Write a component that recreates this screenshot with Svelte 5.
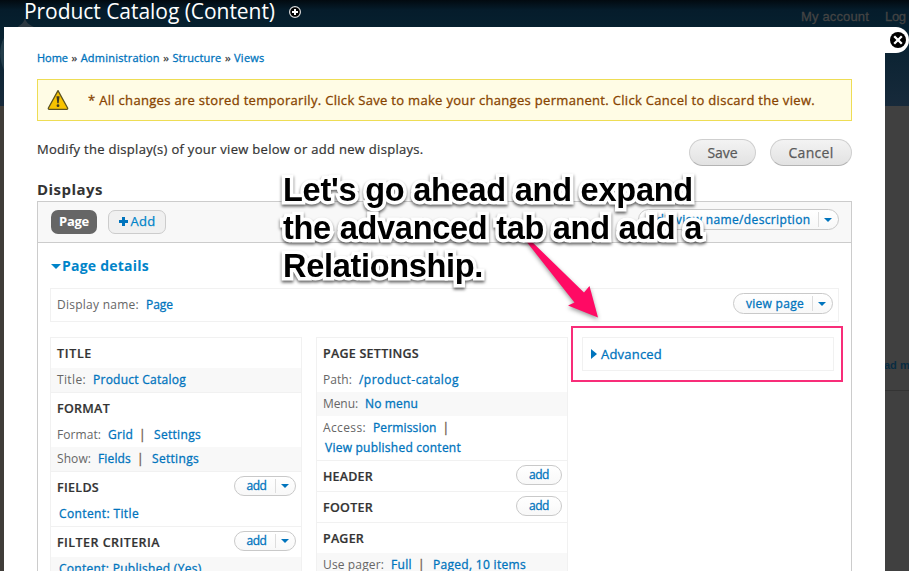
<script>
  // Spreads the letters of a label so that it fills the given measure.
  function fit(node, width) {
    const natural = node.getBoundingClientRect().width;
    const count = node.textContent.length;
    node.style.letterSpacing = `${(width - natural) / count}px`;
  }

  const crumbs = [['Home', 31], ['Administration', 79], ['Structure', 49], ['Views', 30.5]];

  const left = [
    { title: 'TITLE', w: 35, rows: [{ odd: true, items: [['Title:', 29], ['Product Catalog', 93, 'a']] }] },
    {
      title: 'FORMAT', w: 53,
      rows: [
        { items: [['Format:', 44], ['Grid', 25, 'a'], ['|', 3, 'bar'], ['Settings', 47, 'a']] },
        { odd: true, items: [['Show:', 34], ['Fields', 33, 'a'], ['|', 3, 'bar'], ['Settings', 47, 'a']] }
      ]
    },
    { title: 'FIELDS', w: 42, add: 'split', rows: [{ items: [['Content: Title', 80, 'a lone']] }] },
    { title: 'FILTER CRITERIA', w: 103, add: 'split', rows: [{ odd: true, items: [['Content: Published (Yes)', 142.5, 'a lone']] }] }
  ];

  const middle = [
    {
      title: 'PAGE SETTINGS', w: 96,
      rows: [
        { items: [['Path:', 29], ['/product-catalog', 100, 'a']] },
        { odd: true, items: [['Menu:', 35], ['No menu', 53, 'a']] },
        { items: [['Access:', 43], ['Permission', 63.5, 'a'], ['|', 3, 'bar']], second: ['View published content', 136] }
      ]
    },
    { title: 'HEADER', w: 50, add: 'single', rows: [] },
    { title: 'FOOTER', w: 50, add: 'single', rows: [] },
    { title: 'PAGER', w: 41, rows: [{ odd: true, items: [['Use pager:', 61], ['Full', 21, 'a'], ['|', 3, 'bar'], ['Paged, 10 items', 93, 'a']] }] }
  ];
</script>

{#snippet bucket(b)}
  <section class="bucket">
    <div class="bucket-head">
      <h3><span use:fit={b.w}>{b.title}</span></h3>
      {#if b.add}
        <div class="pill {b.add}">
          <span class="pill-text"><span use:fit={20}>add</span></span>
          {#if b.add === 'split'}<span class="pill-arrow"><i class="down"></i></span>{/if}
        </div>
      {/if}
    </div>
    {#each b.rows as row}
      <div class="row" class:odd={row.odd} class:tall={row.second}>
        <div class="line">
          {#each row.items as [text, w, kind]}
            <span class="item {kind ?? 'label'}" use:fit={w}>{text}</span>
          {/each}
        </div>
        {#if row.second}
          <div class="line second"><span class="item a lone" use:fit={row.second[1]}>{row.second[0]}</span></div>
        {/if}
      </div>
    {/each}
  </section>
{/snippet}

<div class="page">
  <div class="site-header"></div>
  <svg class="drop" width="40" height="110" viewBox="0 0 40 110">
    <path d="M25 18 C24 24 18 26 14 30 L40 30 C32 26 26 24 25 18Z" fill="#363f46" opacity=".8" />
    <path d="M4 38 C-1 46 -1 60 4 70Z" fill="#2b4350" opacity=".8" />
  </svg>
  <div class="site-link">ad m</div>
  <div class="site-rule"></div>

  <header>
    <h1><span use:fit={251}>Product Catalog (Content)</span></h1>
    <svg class="plus" width="14" height="14" viewBox="0 0 14 14">
      <circle cx="7" cy="7" r="5.4" fill="#000" stroke="#ddd" stroke-width="1.2" />
      <path d="M7 4v6M4 7h6" stroke="#fff" stroke-width="2" />
    </svg>
    <nav><span use:fit={68}>My account</span><span class="log">Log</span></nav>
  </header>

  <div class="close">
    <svg width="16" height="16" viewBox="0 0 16 16">
      <circle cx="8" cy="8" r="8" fill="#000" />
      <path d="M4.2 4.2l7.6 7.6M11.8 4.2l-7.6 7.6" stroke="#fff" stroke-width="2.3" />
    </svg>
  </div>

  <main>
    <div class="crumbs">
      {#each crumbs as [text, w], i}
        {#if i}<span class="sep">»</span>{/if}
        <span class="a" use:fit={w}>{text}</span>
      {/each}
    </div>

    <div class="message">
      <svg width="22" height="22" viewBox="0 0 22 22">
        <path d="M11 1.6 L20.6 19 Q21 20.4 19.8 20.4 H2.2 Q1 20.4 1.4 19Z" fill="#f8c300" stroke="#5c5320" stroke-width="1.3" stroke-linejoin="round" />
        <path d="M9.5 7.2h3l-.8 7h-1.4z" fill="#3f3a22" /><circle cx="11" cy="16.7" r="1.4" fill="#3f3a22" />
      </svg>
      <span use:fit={727}>* All changes are stored temporarily. Click Save to make your changes permanent. Click Cancel to discard the view.</span>
    </div>

    <div class="actions">
      <p><span use:fit={386.5}>Modify the display(s) of your view below or add new displays.</span></p>
      <div class="btn save"><span use:fit={30}>Save</span></div>
      <div class="btn cancel"><span use:fit={45}>Cancel</span></div>
    </div>

    <h2><span use:fit={66}>Displays</span></h2>

    <div class="displays">
      <div class="tabs">
        <div class="tab on"><span use:fit={30}>Page</span></div>
        <div class="tab">
          <svg width="9" height="9" viewBox="0 0 9 9"><path d="M4.5 0v9M0 4.5h9" stroke="#0074bd" stroke-width="3" /></svg>
          <span use:fit={25}>Add</span>
        </div>
        <div class="pill edit">
          <span class="pill-text"><span use:fit={161}>edit view name/description</span></span>
          <span class="pill-arrow"><i class="down"></i></span>
        </div>
      </div>

      <div class="details-title"><i class="down wide"></i><span use:fit={87}>Page details</span></div>

      <div class="name-box">
        <span class="item label" use:fit={82}>Display name:</span>
        <span class="item a" use:fit={27}>Page</span>
        <div class="pill view">
          <span class="pill-text"><span use:fit={58}>view page</span></span>
          <span class="pill-arrow"><i class="down"></i></span>
        </div>
      </div>

      <div class="columns">
        <div class="column">{#each left as b}{@render bucket(b)}{/each}</div>
        <div class="column">{#each middle as b}{@render bucket(b)}{/each}</div>
        <div class="advanced"><i class="right"></i><span use:fit={61}>Advanced</span></div>
      </div>
    </div>
  </main>

  <div class="highlight"></div>
  <svg class="arrow" width="909" height="571" viewBox="0 0 909 571">
    <path d="M522 236 L574.5 302.5 L568 305.5 L598 317.5 L589.5 286 L584 292.5 L526 236Z" fill="#ff0a64" />
  </svg>
  <div class="note">
    <div><span use:fit={410}>Let's go ahead and expand</span></div>
    <div><span use:fit={419}>the advanced tab and add a</span></div>
    <div><span use:fit={200}>Relationship.</span></div>
  </div>
</div>

<style>
  :global(body) { margin: 0; overflow: hidden; }
  .page {
    position: relative; box-sizing: border-box; width: 909px; height: 571px; overflow: hidden;
    background: linear-gradient(90deg, #403d39 0 50%, #404040 50%);
    font: 12px/20px "Open Sans", "Noto Sans", sans-serif; color: #666;
  }
  .page * { box-sizing: border-box; }
  span { white-space: pre; }
  h1, h2, h3, p { margin: 0; font-weight: normal; }
  .site-header { position: absolute; inset: 0 0 auto; height: 106px; background: linear-gradient(#020a10, #051c2b 10px, #06202f 27px, #172a3b); }
  .drop { position: absolute; left: 0; top: 0; }
  .site-link { position: absolute; left: 884px; top: 355px; font: bold 11px/20px "Liberation Sans", sans-serif; color: #092c42; white-space: nowrap; }
  .site-rule { position: absolute; left: 885px; top: 390px; width: 24px; height: 1px; background: #343434; }

  header { position: relative; display: flex; height: 27px; padding-left: 24px; }
  h1 { flex: none; width: 251px; font-size: 21px; line-height: 23px; color: #fff; }
  .plus { flex: none; margin: 5px 0 0 13px; }
  nav { display: flex; flex: none; position: relative; margin-left: 499px; padding-top: 7px; font: 13px/20px "Liberation Sans", sans-serif; color: #444; }
  nav { -webkit-text-stroke: .3px #444; }
  .log { margin-left: 16px; letter-spacing: -.3px; }
  .close { position: absolute; left: 885px; top: 27px; width: 24px; height: 26px; padding: 5px 0 0 5px; background: #fff; border-radius: 0 13px 13px 0; }
  .close svg { display: block; }

  main { position: relative; width: 881px; height: 544px; margin-left: 4px; padding: 21px 33px 0; background: #fff; overflow: hidden; }
  .a { color: #0074bd; -webkit-text-stroke: .3px #0074bd; }
  .crumbs { display: flex; height: 20px; font-size: 11px; line-height: 20px; }
  .sep { width: 12.7px; text-align: center; color: #444; font-weight: 600; }
  .message { display: flex; align-items: center; height: 42px; margin-top: 11px; padding-left: 9px; border: 1px solid #ed5; background: #fffce5; color: #840; font-size: 13px; -webkit-text-stroke: .3px #840; }
  .message svg { margin-right: 19px; }
  .actions { display: flex; height: 27px; margin-top: 18px; }
  .actions p { flex: 1; font-size: 13px; line-height: 21px; color: #333; -webkit-text-stroke: .2px #333; }
  .btn { height: 27px; border: 1px solid #cfcfcf; border-bottom-color: #b4b4b4; border-radius: 14px; background: linear-gradient(#f3f3f3, #e2e2e2); color: #5a5a5a; font-size: 14px; line-height: 26px; text-align: center; -webkit-text-stroke: .25px #5a5a5a; }
  .save { width: 67px; }
  .cancel { width: 82px; margin-left: 14px; }
  h2 { height: 24px; margin-top: 11px; font-size: 15px; line-height: 24px; font-weight: 700; color: #333; }
  .displays { height: 420px; border: 1px solid #ccc; }
  .tabs { display: flex; height: 41px; padding: 8px 12px 0 13px; border-bottom: 1px solid #ccc; background: #f8f8f8; }
  .tab { display: flex; align-items: center; justify-content: center; width: 58px; height: 24px; border: 1px solid #ccc; border-radius: 7px; background: #f0f0f0; color: #0084c9; font-size: 13px; line-height: 18px; padding-bottom: 2px; -webkit-text-stroke: .25px #0084c9; }
  .tab svg { margin-right: 3px; }
  .tab.on { width: 46px; margin-right: 11px; border: 0; background: #666; color: #fff; font-weight: 700; -webkit-text-stroke: 0; }

  .pill { display: flex; height: 20px; border: 1px solid #c9c9c9; border-radius: 11px; background: linear-gradient(#fff, #f8f8f8); color: #0074bd; line-height: 18px; -webkit-text-stroke: .3px #0074bd; }
  .pill-text { flex: 1; text-align: center; }
  .pill-arrow { display: flex; align-items: center; justify-content: center; width: 20px; margin: 2px 0; padding-right: 2px; border-left: 1px solid #ddd; }
  .split .pill-text { padding-left: 3px; }
  .split { width: 62px; }
  .single { width: 46px; }
  .edit { width: 201px; height: 21px; margin: -1px 0 0 auto; line-height: 20px; }
  .edit .pill-text { padding-left: 3px; }
  .view { width: 100px; height: 21px; margin: 4px 5px 0 auto; }
  .view .pill-text { padding-left: 4px; }
  i.down { border: 4px solid transparent; border-top-color: #0074bd; border-bottom: 0; }
  i.wide { border-width: 5px; border-bottom: 0; border-top-color: #0084c9; margin-right: 1px; }
  i.right { border: 5px solid transparent; border-left: 6px solid #0074bd; border-right: 0; margin-right: 4px; }

  .details-title { display: flex; align-items: center; height: 46px; padding-left: 13px; color: #0084c9; font-size: 14px; font-weight: 700; }
  .name-box { display: flex; width: 789px; height: 34px; margin: -1px 0 0 12px; padding-left: 6px; border: 1px solid #f1f1f1; line-height: 32px; }
  .name-box .pill { line-height: 19px; }
  .columns { display: flex; align-items: flex-start; gap: 14px; margin: 15px 0 0 12px; }
  .column { width: 252px; border: 1px solid #f1f1f1; }
  .bucket + .bucket { border-top: 1px solid #f1f1f1; }
  .bucket-head { display: flex; height: 30px; padding: 4px 5px 0 6px; }
  h3 { flex: 1; font-size: 12.5px; line-height: 24px; font-weight: 600; color: #333; -webkit-text-stroke: .2px #333; }
  .row { height: 24px; padding: 0 6px; }
  .row.tall { height: 44px; }
  .odd { background: #f8f8f8; }
  .line { display: flex; height: 24px; line-height: 23px; }
  .second { height: 20px; line-height: 16px; }
  .item.a { margin-left: 7px; }
  .item.lone { margin-left: 2px; }
  .bar { margin-left: 6px; color: #765; -webkit-text-stroke: .4px #765; }
  .bar + .item.a { margin-left: 12px; }
  .advanced { display: flex; align-items: center; width: 252px; height: 34px; padding-left: 8px; border: 1px solid #f1f1f1; color: #0074bd; font-size: 13px; -webkit-text-stroke: .3px #0074bd; }

  .highlight { position: absolute; left: 571px; top: 326px; width: 272px; height: 56px; border: 2px solid #f82d79; }
  .arrow { position: absolute; left: 0; top: 0; filter: drop-shadow(0 2px 2px #0006); }
  .note { position: absolute; left: 283px; top: 171px; font: bold 32.5px/38px "Liberation Sans", Arial, sans-serif; color: #000; -webkit-text-stroke: 7px #fff; paint-order: stroke fill; stroke-linejoin: round; filter: drop-shadow(0 2px 1.5px #0009); }
</style>
